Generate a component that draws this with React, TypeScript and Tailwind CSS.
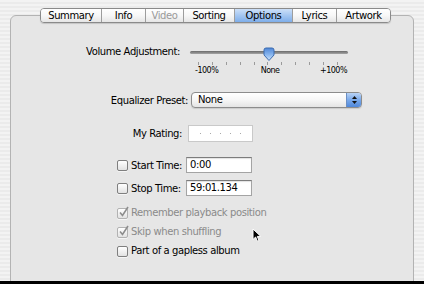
import React from 'react';

const tabs = [
  { label: 'Summary', width: 'w-[60px]' },
  { label: 'Info', width: 'w-[44px]' },
  { label: 'Video', width: 'w-[38px]', disabled: true },
  { label: 'Sorting', width: 'w-[51px]' },
  { label: 'Options', width: 'w-[58px]', selected: true },
  { label: 'Lyrics', width: 'w-[44px]' },
  { label: 'Artwork', width: 'w-[54px]' },
];

function Checkbox({ checked, disabled }: { checked?: boolean; disabled?: boolean }) {
  return (
    <div
      className={`relative w-[11px] h-[11px] shrink-0 rounded-[2px] border bg-linear-to-b from-white to-[#e2e2e2] shadow-[0_1px_0_rgba(255,255,255,0.6)] ${
        disabled ? 'border-[#b2b2b2]' : 'border-[#7f7f7f]'
      }`}
    >
      {checked && (
        <svg className="absolute left-[0px] top-[-3px]" width="12" height="12" viewBox="0 0 12 12">
          <path d="M2 6.5 L4.5 9.5 L10 1" fill="none" stroke={disabled ? '#8d8d8d' : '#222'} strokeWidth="1.6" />
        </svg>
      )}
    </div>
  );
}

function VolumeSlider() {
  const ticks = Array.from({ length: 11 });
  return (
    <div className="relative w-[158px] pt-[6px]">
      <div className="h-[3px] rounded-full bg-linear-to-b from-[#6a6a6a] to-[#a5a5a5]" />
      {/* thumb sits over the track */}
      <svg className="absolute left-[73px] top-[2px]" width="12" height="15" viewBox="0 0 12 15">
        <defs>
          <linearGradient id="thumb" x1="0" y1="0" x2="0" y2="1">
            <stop offset="0" stopColor="#4f86d6" />
            <stop offset="0.55" stopColor="#8ab7ef" />
            <stop offset="1" stopColor="#cfe4fb" />
          </linearGradient>
        </defs>
        <path d="M1 3 Q1 1 3 1 H9 Q11 1 11 3 V8 L6 13.5 L1 8 Z" fill="url(#thumb)" stroke="#3d6cb0" strokeWidth="1" />
      </svg>
      <div className="mt-[8px] flex justify-between pl-[8px] pr-[10px]">
        {ticks.map((_, i) => (
          <div key={i} className="w-px h-[3px] bg-[#9b9b9b]" />
        ))}
      </div>
      <div className="mt-[1px] flex justify-between pl-[5px] pr-[1px] text-[8px] leading-[10px] tracking-[-0.5px]">
        <span>-100%</span>
        <span className="pl-[2px]">None</span>
        <span>+100%</span>
      </div>
    </div>
  );
}

function TextField({ value }: { value: string }) {
  return (
    <div className="w-[66px] h-[16px] border border-[#a4a4a4] border-t-[#7c7c7c] bg-white pl-[3px] leading-[14px] shadow-[inset_0_1px_1px_rgba(0,0,0,0.12)]">
      {value}
    </div>
  );
}

export default function App() {
  return (
    <div className="relative w-[424px] h-[284px] overflow-hidden border-b-[3px] border-black bg-[repeating-linear-gradient(180deg,#f3f3f3_0px,#f3f3f3_2px,#ebebeb_2px,#ebebeb_4px)] font-['Lucida_Grande','DejaVu_Sans',sans-serif] text-[10px] tracking-[-0.4px] text-black">
      {/* Tab bar overlapping the panel border */}
      <div className="relative z-10 flex pl-[40px] pt-[8px]">
        <div className="flex h-[15px] overflow-hidden rounded-[4px] border border-[#8a8a8a] shadow-[0_1px_1px_rgba(0,0,0,0.15)]">
          {tabs.map((tab, i) => (
            <div
              key={tab.label}
              className={`${tab.width} flex items-center justify-center leading-none ${
                i > 0 ? 'border-l border-[#9d9d9d]' : ''
              } ${
                tab.selected
                  ? 'bg-linear-to-b from-[#cde0f8] via-[#a4c6f1] to-[#7eaeea]'
                  : 'bg-linear-to-b from-white via-[#f7f7f7] to-[#e6e6e6]'
              } ${tab.disabled ? 'text-[#9a9a9a]' : ''}`}
            >
              {tab.label}
            </div>
          ))}
        </div>
      </div>

      {/* Panel */}
      <div className="mx-[10px] -mt-[8px] h-[280px] rounded-t-[6px] border border-[#b3b3b3] bg-[#e6e6e6] pt-[29px]">
        {/* Volume */}
        <div className="flex items-start">
          <div className="w-[169px] text-right leading-[13px]">Volume Adjustment:</div>
          <div className="ml-[10px]">
            <VolumeSlider />
          </div>
        </div>

        {/* Equalizer */}
        <div className="mt-[16px] flex items-center">
          <div className="w-[177px] text-right">Equalizer Preset:</div>
          <div className="ml-[3px] flex h-[16px] w-[171px] overflow-hidden rounded-[4px] border border-[#8c8c8c] bg-linear-to-b from-white via-[#f6f6f6] to-[#e4e4e4] shadow-[0_1px_1px_rgba(0,0,0,0.12)]">
            <div className="flex-1 pl-[6px] leading-[14px]">None</div>
            <div className="flex w-[15px] flex-col items-center justify-center gap-[2px] border-l border-[#6b8fc4] bg-linear-to-b from-[#b9d3f5] via-[#7aa9ea] to-[#4f88db]">
              <svg width="5" height="3" viewBox="0 0 5 3"><path d="M0 3 L2.5 0 L5 3 Z" fill="#111" /></svg>
              <svg width="5" height="3" viewBox="0 0 5 3"><path d="M0 0 L5 0 L2.5 3 Z" fill="#111" /></svg>
            </div>
          </div>
        </div>

        {/* Rating */}
        <div className="mt-[17px] flex items-center">
          <div className="w-[171px] text-right">My Rating:</div>
          <div className="ml-[6px] flex h-[17px] w-[65px] items-center gap-[9px] border border-[#c9c9c9] bg-white pl-[11px]">
            {[0, 1, 2, 3, 4].map((i) => (
              <div key={i} className="w-px h-px bg-[#a9a9a9]" />
            ))}
          </div>
        </div>

        {/* Start / Stop time */}
        <div className="mt-[15px] flex items-center">
          <div className="ml-[106px] flex w-[69px] items-center gap-[3px]">
            <Checkbox />
            <span>Start Time:</span>
          </div>
          <TextField value="0:00" />
        </div>
        <div className="mt-[7px] flex items-center">
          <div className="ml-[106px] flex w-[69px] items-center gap-[3px]">
            <Checkbox />
            <span>Stop Time:</span>
          </div>
          <TextField value="59:01.134" />
        </div>

        {/* Options */}
        <div className="mt-[11px] ml-[106px] flex flex-col gap-[7px] leading-[12px]">
          <div className="flex items-center gap-[3px] text-[#8a8a8a]">
            <Checkbox checked disabled />
            <span>Remember playback position</span>
          </div>
          <div className="flex items-center gap-[3px] text-[#8a8a8a]">
            <Checkbox checked disabled />
            <span>Skip when shuffling</span>
          </div>
          <div className="flex items-center gap-[3px]">
            <Checkbox />
            <span>Part of a gapless album</span>
          </div>
        </div>
      </div>

      {/* Mouse pointer */}
      <svg className="absolute left-[252px] top-[228px]" width="10" height="15" viewBox="0 0 10 15">
        <path d="M1 1 L1 11.5 L3.6 9 L5.4 13.2 L7 12.5 L5.3 8.4 L8.8 8.4 Z" fill="#000" stroke="#fff" strokeWidth="1" strokeLinejoin="round" />
      </svg>
    </div>
  );
}
